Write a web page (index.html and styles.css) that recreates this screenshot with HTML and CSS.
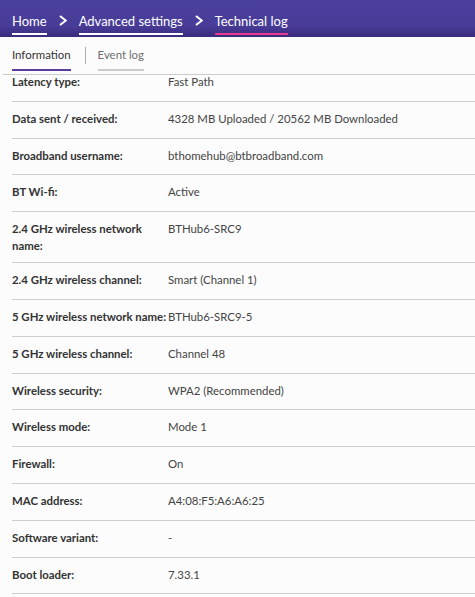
FILE: index.html
```html
<!DOCTYPE html>
<html lang="en">
<head>
<meta charset="utf-8">
<title>Technical log</title>
<link rel="stylesheet" href="styles.css">
</head>
<body>
<header class="topbar">
  <nav class="crumbs">
    <a class="crumb">Home</a>
    <svg class="chev" width="8" height="11" viewBox="0 0 8 11"><polyline points="1,1 6.8,5.5 1,10" fill="none" stroke="#fff" stroke-width="2"/></svg>
    <a class="crumb">Advanced settings</a>
    <svg class="chev" width="8" height="11" viewBox="0 0 8 11"><polyline points="1,1 6.8,5.5 1,10" fill="none" stroke="#fff" stroke-width="2"/></svg>
    <a class="crumb current">Technical log</a>
  </nav>
</header>
<div class="tabs">
  <span class="tab active">Information</span>
  <span class="tab-sep"></span>
  <span class="tab">Event log</span>
</div>
<div class="viewport">
  <div class="list">
    <div class="row"><div class="label">Latency type:</div><div class="value">Fast Path</div></div>
    <div class="row"><div class="label">Data sent / received:</div><div class="value">4328 MB Uploaded / 20562 MB Downloaded</div></div>
    <div class="row"><div class="label">Broadband username:</div><div class="value">bthomehub@btbroadband.com</div></div>
    <div class="row"><div class="label">BT Wi-fi:</div><div class="value">Active</div></div>
    <div class="row"><div class="label">2.4 GHz wireless network name:</div><div class="value">BTHub6-SRC9</div></div>
    <div class="row"><div class="label">2.4 GHz wireless channel:</div><div class="value">Smart (Channel 1)</div></div>
    <div class="row"><div class="label">5 GHz wireless network name:</div><div class="value">BTHub6-SRC9-5</div></div>
    <div class="row"><div class="label">5 GHz wireless channel:</div><div class="value">Channel 48</div></div>
    <div class="row"><div class="label">Wireless security:</div><div class="value">WPA2 (Recommended)</div></div>
    <div class="row"><div class="label">Wireless mode:</div><div class="value">Mode 1</div></div>
    <div class="row"><div class="label">Firewall:</div><div class="value">On</div></div>
    <div class="row"><div class="label">MAC address:</div><div class="value">A4:08:F5:A6:A6:25</div></div>
    <div class="row"><div class="label">Software variant:</div><div class="value">-</div></div>
    <div class="row"><div class="label">Boot loader:</div><div class="value">7.33.1</div></div>
  </div>
</div>
</body>
</html>
```
FILE: styles.css
```css
html, body {
  margin: 0;
  padding: 0;
  background: #fcfcfc;
  font-family: Lato, "Liberation Sans", sans-serif;
  color: #333;
}
.topbar {
  height: 37px;
  background: linear-gradient(#4a409e 0%, #483c98 70%, #3b2b7d 100%);
  display: flex;
  align-items: flex-start;
  padding-left: 12px;
  box-sizing: border-box;
}
.crumbs {
  display: flex;
  align-items: flex-start;
  gap: 12px;
}
.crumb {
  color: #fff;
  font-size: 13px;
  line-height: 18px;
  padding-top: 12px;
  padding-bottom: 3px;
  border-bottom: 2px solid #fff;
  white-space: nowrap;
}
.crumb.current {
  border-bottom-color: #e6398f;
}
.chev {
  margin-top: 15px;
}
.tabs {
  height: 37px;
  border-bottom: 1px solid #cccccc;
  margin-left: 3px;
  padding-left: 9px;
  display: flex;
  align-items: flex-start;
}
.tab {
  font-size: 11.4px;
  line-height: 16px;
  padding-top: 10px;
  padding-bottom: 6px;
  border-bottom: 2px solid #cccccc;
  color: #6e6e6e;
}
.tab.active {
  color: #333;
  border-bottom-color: #5a3d9c;
}
.tab-sep {
  width: 1px;
  height: 17px;
  background: #aaaaaa;
  margin: 10px 12px 0 14px;
}
.viewport {
  overflow: hidden;
  height: 522px;
}
.list {
  margin-top: -10px;
  margin-left: 12px;
}
.row {
  display: grid;
  grid-template-columns: 156px 1fr;
  padding: 8px 0;
  min-height: 19.8px;
  border-bottom: 1px solid #cccccc;
  font-size: 11.4px;
  line-height: 17px;
}
.label {
  font-weight: bold;
  color: #333;
}
.value {
  color: #444;
}
```
